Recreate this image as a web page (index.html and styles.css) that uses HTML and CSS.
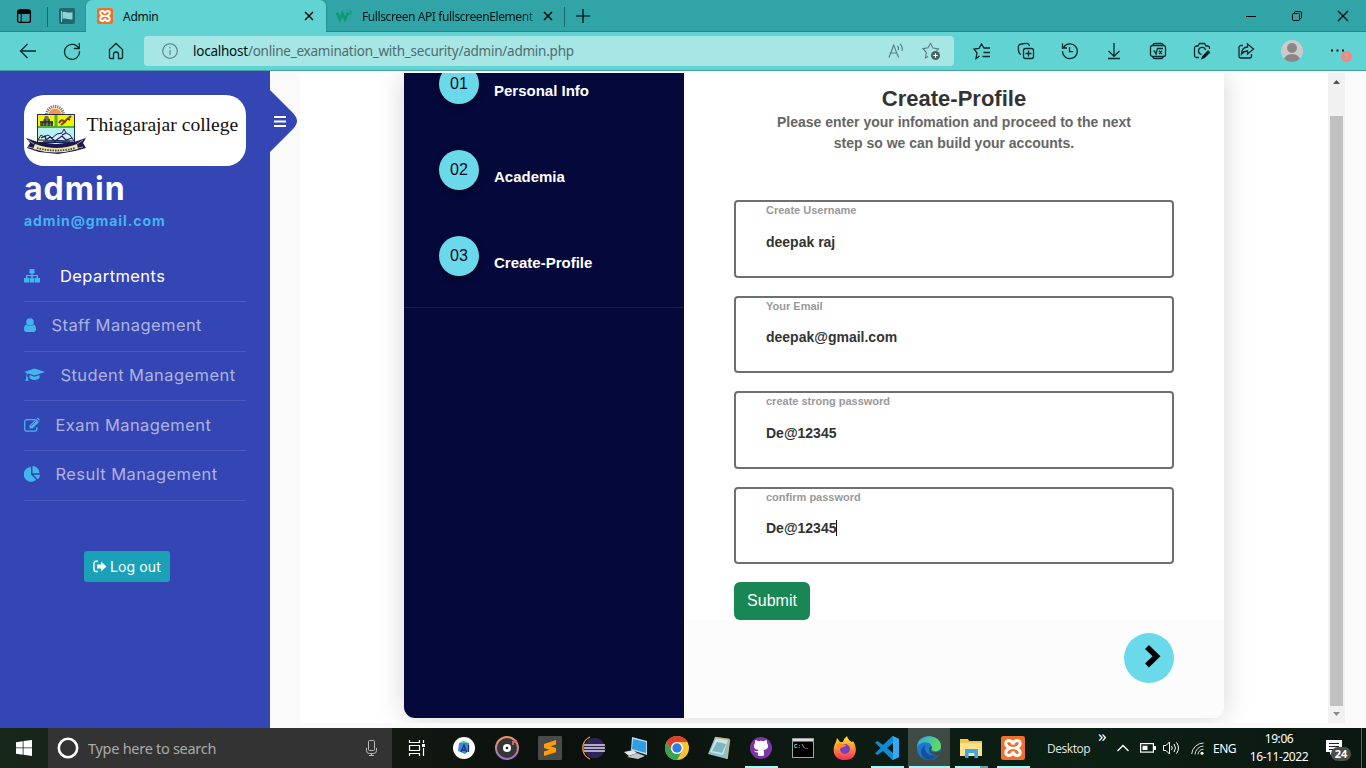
FILE: index.html
```html
<!DOCTYPE html>
<html lang="en">
<head>
<meta charset="utf-8">
<title>Admin</title>
<link rel="stylesheet" href="styles.css">
</head>
<body>
<div class="screen">
  <header class="tabstrip">
    <div class="tab-actions"><svg width="16" height="16" viewBox="0 0 16 16"><rect x="1.6" y="2" width="12.8" height="12.4" rx="2" fill="none" stroke="#000" stroke-width="1.3"/><path d="M1.5 3.5a2 2 0 0 1 2-2h9a2 2 0 0 1 2 2V6h-13z"/><path d="M5.2 5v9" stroke="#000"/></svg></div>
    <div class="pinned"><svg width="16" height="16" viewBox="0 0 16 16"><rect width="16" height="16" rx="2" fill="#20686d"/><path d="M2.5 3v11" stroke="#8cd3d5"/><path d="M3.500 4c3-1 5 1.500 10 .2v7c-4 1-6-1.500-10-.2z" fill="#8cd3d5"/></svg></div>
    <div class="tab active">
      <svg width="16" height="16" viewBox="0 0 16 16"><rect width="16" height="16" rx="2" fill="#ee702a"/><g fill="none" stroke="#fff" stroke-width="2"><path d="M8 5.700C7.400 2.200 3.200 2.300 3.200 5c0 2 2 2.500 3 3-1 .5-3 1-3 3 0 2.700 4.200 2.800 4.800-.7.600 3.500 4.800 3.400 4.800.7 0-2-2-2.500-3-3 1-.5 3-1 3-3 0-2.700-4.200-2.800-4.800.7z"/><path d="M5.500 8h5" stroke-width="1.500"/></g></svg>
      <span class="tab-title">Admin</span>
      <svg class="close" width="10" height="10" viewBox="0 0 10 10"><path d="M1 1l8 8M9 1L1 9" stroke="#000" stroke-width="1.400"/></svg>
    </div>
    <div class="tab">
      <svg width="17" height="16" viewBox="0 0 17 16"><path d="M1 4.500l2.800 7 2.600-6 2.600 6 3.200-7" fill="none" stroke="#0a9c70" stroke-width="2.700"/><path d="M13 3h2.500l-1.300 1.500c2 0 1.500 2.300-.8 1.700" fill="none" stroke="#0a9c70" stroke-width=".9"/></svg>
      <span class="tab-title faded">Fullscreen API fullscreenElement</span>
      <svg class="close" width="10" height="10" viewBox="0 0 10 10"><path d="M1 1l8 8M9 1L1 9" stroke="#000" stroke-width="1.400"/></svg>
    </div>
    <div class="newtab"><svg width="14" height="14" viewBox="0 0 14 14"><path d="M7 0v14M0 7h14" stroke="#000" stroke-width="1.200"/></svg></div>
    <div class="win-controls">
      <span><svg width="12" height="12" viewBox="0 0 12 12"><path d="M1 6.500h10" stroke="#000"/></svg></span>
      <span><svg width="12" height="12" viewBox="0 0 12 12" fill="none" stroke="#000"><rect x="1.500" y="3.500" width="7" height="7" rx="1"/><path d="M3.500 3V2.500a1 1 0 0 1 1-1H9A1.500 1.500 0 0 1 10.500 3v4.500a1 1 0 0 1-1 1H9"/></svg></span>
      <span><svg width="12" height="12" viewBox="0 0 12 12"><path d="M1 1l10 10M11 1L1 11" stroke="#000" stroke-width="1.100"/></svg></span>
    </div>
  </header>

  <nav class="toolbar">
    <div class="nav-buttons">
      <span><svg width="18" height="18" viewBox="0 0 18 18"><path d="M17 9H1.500M8.500 2L1.500 9l7 7"/></svg></span>
      <span><svg width="18" height="18" viewBox="0 0 18 18"><path d="M16 7A7.500 7.500 0 1 0 16.500 9M16.300 1v5.500h-5.500"/></svg></span>
      <span><svg width="18" height="18" viewBox="0 0 18 18"><path d="M2.500 7.500L9 1.500l6.500 6v8a1 1 0 0 1-1 1h-3v-4a2.500 2.500 0 0 0-5 0v4h-3a1 1 0 0 1-1-1z"/></svg></span>
    </div>
    <div class="address">
      <svg width="16" height="16" viewBox="0 0 16 16"><circle cx="8" cy="8" r="7.300"/><path d="M8 7v5M8 4v1.500"/></svg>
      <span class="url"><b>localhost</b>/online_examination_with_security/admin/admin.php</span>
      <svg class="aloud" width="18" height="18" viewBox="0 0 18 18"><path d="M2 15.500L6.700 3l4.800 12.500M3.500 11h6.500M10.500 4q1.500 1.500 1 4M13 2q3 2.500 2 7"/></svg>
      <svg width="19" height="19" viewBox="0 0 19 19"><path d="M6 14.500l-2.500 1.500.8-5.500L1 6.700l5-.9 2.500-4.500L11 6l5.500.9-2 2"/><circle cx="13.500" cy="13.500" r="4.500" fill="#4b6262" stroke="none"/><path d="M11.200 13.500h4.600M13.500 11.200v4.600" stroke="#fff"/></svg>
    </div>
    <div class="tools">
      <span><svg width="18" height="18" viewBox="0 0 18 18"><path d="M6.500 14L3 16.500l1-5.500-3-4 5-.7L8.500 2 11 6h6M10.500 10.500H17M9.500 14.500H17"/></svg></span>
      <span><svg width="18" height="18" viewBox="0 0 18 18"><rect x="6.500" y="6.500" width="10" height="10" rx="2"/><path d="M11.500 8.500v6M8.500 11.500h6M4 12.500C1 11.500 1.800 10 1.300 6 1 3 2 2.500 4.500 2L9 1.400c2-.2 3 .4 3.400 2.600"/></svg></span>
      <span><svg width="18" height="18" viewBox="0 0 18 18"><path d="M2.500 5.500A7.400 7.400 0 1 1 1.500 9M1.500 1.500v4.500H6M8.500 5v4.700h3.700"/></svg></span>
      <span><svg width="18" height="18" viewBox="0 0 18 18"><path d="M9 1v13M3.500 9L9 14.300 14.500 9M3 16.500h12"/></svg></span>
      <span><svg width="18" height="18" viewBox="0 0 18 18"><rect x="1.500" y="3.500" width="15" height="11" rx="2"/><path d="M4 3.500c0-2 1-2 2-2h6c1 0 2 0 2 2M4 14.500c0 2 1 2 2 2h6c1 0 2 0 2-2M4.500 9l1 .2L7 12l1.500-5.500H14M10 8.800l3 3.200M13 8.800L10 12"/></svg></span>
      <span><svg width="18" height="18" viewBox="0 0 18 18"><path d="M6 15.500H3.500a2 2 0 0 1-2-2V6a2 2 0 0 1 2-2H5l1.500-2.500h5L13 4h1.500a2 2 0 0 1 2 2v1M8.500 12.500A3.600 3.600 0 1 1 12.600 8"/><path d="M9 16.500l1-2.500 5-5 1.500 1.500-5 5z" fill="#000"/></svg></span>
      <span><svg width="18" height="18" viewBox="0 0 18 18"><path d="M6 3.500H4a2 2 0 0 0-2 2V14a2 2 0 0 0 2 2h8.500a2 2 0 0 0 2-2v-2M10.500 2l6 5-6 5V9c-3 0-4.500 1-6 3 .3-4 2.500-7 6-7z"/></svg></span>
      <span class="avatar"><svg width="22" height="22" viewBox="0 0 22 22"><defs><clipPath id="av"><circle cx="11" cy="11" r="11"/></clipPath></defs><g clip-path="url(#av)"><rect width="22" height="22" fill="#cbcbcb"/><circle cx="11" cy="8" r="5" fill="#888"/><ellipse cx="11" cy="20" rx="8" ry="6" fill="#888"/></g></svg></span>
      <span class="more"><svg width="24" height="24" viewBox="0 0 24 24"><path d="M3 10.500h2v2H3zM8.500 10.500h2v2h-2zM14 10.500h2v2h-2z" fill="#111"/><circle cx="18.500" cy="17.500" r="5.500" fill="#f7857b"/><path d="M18.500 20.500v-5.500M16.800 16.500l1.700-1.700 1.700 1.700" style="stroke:#b9b0a8" fill="none"/></svg></span>
    </div>
  </nav>

  <main class="page">
    <aside class="sidebar">
      <div class="logo">
        <svg class="crest" width="62" height="50" viewBox="0 0 62 50">
          <circle cx="30" cy="10" r="8.500" fill="none" stroke="#887652" stroke-width="3" stroke-dasharray="1.200 .9"/>
          <circle cx="30" cy="10" r="6.500" fill="#fa9448"/>
          <rect x="12.500" y="9.500" width="37" height="28" fill="#f2f500" stroke="#24275c"/>
          <path d="M13 23h36v9H13z" fill="#b7f1ed"/><path d="M13 21h36v2H13zM29.500 10h3v12h-3z" fill="#52b22f"/>
          <path d="M15 21v-5h3l2-5 3 0 2 5h3v5z" fill="#77744b"/><path d="M15 17h13M17 17v4M20 14v7M24 14v7M27 17v4" stroke="#111435"/>
          <path d="M34 18q3-5 5-1l7-6M36 20l5-4M42 13l3 2" fill="none" stroke="#7a3b12" stroke-width="2"/>
          <path d="M13 35l3-5 3 2 4-2 4 3 5-4 5-1 2-4 2 4 4 2 4 6z" fill="#dbe9f7" stroke="#14245d"/>
          <path d="M16 33l4-2 1 4 4-3 5 4 7-5 4 4 6-2M18 37h27M37 30l4-2" fill="none" stroke="#112660" stroke-width="1.300"/>
          <path d="M1 33l12 4 18 2 18-2 12-4-3 5 3 5-11 3-17 3-19-2-12-4 3-5z" fill="#1b194f"/>
          <path d="M10 39q22 8 42 0l1 5q-23 7-45 0z" fill="#ece8ab"/><path d="M12 43q20 5 38 0" fill="none" stroke="#3f3e49" stroke-width="1.800" stroke-dasharray="1.500 1.100"/>
          <path d="M3 35l6 4M58 35l-6 4M3 42l5 1M58 42l-5 1" stroke="#9ca0bf"/>
        </svg>
        <span>Thiagarajar college</span>
      </div>
      <h1>admin</h1>
      <p class="mail">admin@gmail.com</p>
      <ul class="menu">
        <li class="on"><svg width="16" height="16" viewBox="0 0 16 16"><path d="M5.500 1h5v4.500H8.700V7H14v3h2v4.500h-5V10h1.500V8.300H8.700V10h1.800v4.500h-5V10h1.800V8.300H3.500V10H5v4.500H0V10h2V7h5.300V5.500H5.500z"/></svg><span>Departments</span></li>
        <li><svg width="12" height="16" viewBox="0 0 12 16"><circle cx="6" cy="5" r="3.800"/><path d="M2.500 7.500C.7 8 0 9.800 0 12c0 2 1 3 2.500 3h7c1.500 0 2.500-1 2.500-3 0-2.200-.7-4-2.500-4.500-2 2-5 2-7 0z"/></svg><span>Staff Management</span></li>
        <li><svg width="21" height="16" viewBox="0 0 21 16"><path d="M10.500 1.500L21 5 10.500 8.500 4 6.400Q3.200 7 3 9l.8 1L4.500 14H1.500l.8-4 .5-3.900L0 5zM5.500 8l5 1.700 5-1.700v3c-2 2.600-8 2.600-10 0z"/></svg><span>Student Management</span></li>
        <li><svg width="16" height="16" viewBox="0 0 16 16"><path d="M11.500 2.700H3A2.300 2.300 0 0 0 .7 5v7A2.300 2.300 0 0 0 3 14.200h7.500A2.300 2.300 0 0 0 12.800 12v-2" fill="none" stroke="#42b5ed" stroke-width="1.300"/><path d="M5.500 8.500L12 2l3 3-6.500 6.500h-3zM12.700 1.300l1-.8 2.300 2.300-.8 1z"/><path d="M7 9l5-5" stroke="#3445b4" stroke-width=".7"/></svg><span>Exam Management</span></li>
        <li><svg width="16" height="16" viewBox="0 0 16 16"><path d="M7 1v7.500l5.200 5.300A7.400 7.400 0 1 1 7 1zM8.500 0a7 7 0 0 1 7 7.300h-7zM9.300 8.700H16a7 7 0 0 1-2 4.700z"/></svg><span>Result Management</span></li>
      </ul>
      <a class="logout"><svg width="14" height="13" viewBox="0 0 14 13"><path d="M5 1.200H3A2 2 0 0 0 1 3v6.500A2 2 0 0 0 3 11.500h2" fill="none" stroke="#fff" stroke-width="1.400"/><path d="M8 1.500l5.500 5L8 11.500v-3H4V4.500h4z" fill="#fff"/></svg><span>Log out</span></a>
      <svg class="toggle" width="28" height="62" viewBox="0 0 28 62"><path d="M0 0l22 22q5 5 5 9t-5 9L0 62z" fill="#3445b4"/><path d="M4 27h12M4 31.500h12M4 36h12" stroke="#fff" stroke-width="2.200"/></svg>
    </aside>

    <section class="content">
      <div class="frame">
        <div class="view">
        <div class="card">
          <div class="steps">
            <div class="step"><i>01</i><b>Personal Info</b></div>
            <div class="step"><i>02</i><b>Academia</b></div>
            <div class="step"><i>03</i><b>Create-Profile</b></div>
          </div>
          <div class="form">
            <div class="form-main">
              <h2>Create-Profile</h2>
              <p class="lead">Please enter your infomation and proceed to the next<br>step so we can build your accounts.</p>
              <div class="fields">
                <div class="field"><label>Create Username</label><span>deepak raj</span></div>
                <div class="field"><label>Your Email</label><span>deepak@gmail.com</span></div>
                <div class="field"><label>create strong password</label><span>De@12345</span></div>
                <div class="field"><label>confirm password</label><span class="caret">De@12345</span></div>
              </div>
              <button class="submit">Submit</button>
            </div>
            <div class="form-foot"><div class="next"><svg width="50" height="50" viewBox="0 0 50 50"><path d="M23 14l9.500 9.300-9.500 9.200" fill="none" stroke="#000" stroke-width="5.500"/></svg></div></div>
          </div>
        </div>
        </div>
        <div class="scrollbar">
          <svg width="17" height="17" viewBox="0 0 17 17"><path d="M5 11l3.500-4L12 11z" fill="#505050"/></svg>
          <div class="thumb"></div>
          <svg width="17" height="17" viewBox="0 0 17 17"><path d="M5 6l3.500 4L12 6z" fill="#8a8a8a"/></svg>
        </div>
      </div>
    </section>
  </main>

  <footer class="taskbar">
    <div class="start"><svg width="16" height="16" viewBox="0 0 16 16" fill="#fff"><path d="M0 2.200L6.700 1.200V7.500H0zM7.500 1.100L16 0v7.500H7.500zM0 8.300h6.700v6.400L0 13.800zM7.500 8.300H16V16l-8.500-1.200z"/></svg></div>
    <div class="search"><svg width="22" height="22" viewBox="0 0 22 22"><circle cx="11" cy="11" r="9.200" fill="none" stroke="#fff" stroke-width="2.600"/></svg><span>Type here to search</span><svg class="mic" width="13" height="18" viewBox="0 0 13 18" fill="none" stroke="#bbb"><rect x="3.500" y="1.500" width="6" height="10" rx="1"/><path d="M1.500 9v2.500a3 3 0 0 0 3 3h4a3 3 0 0 0 3-3V9M6.500 14.500v2M4 16.500h5"/></svg></div>
    <div class="taskview"><svg width="17" height="16" viewBox="0 0 17 16" fill="none" stroke="#fff" stroke-width="1.200"><path d="M1.500 0v2.500h10V0M1.500 16v-2.500h10V16M1.500 5.500h10v5h-10zM15.500 0v3M15.500 8v8"/><path d="M14 4h3v3h-3z" fill="#fff" stroke="none"/></svg></div>
    <div class="apps wide">
      <span><svg width="22" height="22" viewBox="0 0 22 22"><circle cx="11" cy="11" r="11" fill="#fff"/><path d="M6 6l4-1 6 1v8l-4 3-7-3z" fill="#4285ef"/><path d="M7 6q3-4 8 0z" fill="#45d781"/><path d="M8 15l3-7 2.500 7M9 13h3.500M15.500 8v7" stroke="#17355d" stroke-width="1.300" fill="none"/></svg></span>
      <span><svg width="24" height="24" viewBox="0 0 24 24"><defs><linearGradient id="mu" x2="0" y2="1"><stop stop-color="#f39361"/><stop offset="1" stop-color="#9772c6"/></linearGradient></defs><circle cx="12" cy="12" r="11" fill="#353638" stroke="url(#mu)" stroke-width="2"/><circle cx="12" cy="12" r="4" fill="#fff"/><circle cx="12" cy="12" r="1.300" fill="#222"/><path d="M18 9V6l4-1" stroke="#c47070" stroke-width="2" fill="none"/></svg></span>
      <span><svg width="24" height="24" viewBox="0 0 24 24"><rect width="24" height="24" rx="1" fill="#4a4a4a"/><path d="M6 8l12-4v4.500L12.500 10.300 18 12v4.200L6 20v-4.500l5.500-1.800L6 12z" fill="#ff9b05"/></svg></span>
      <span><svg width="24" height="24" viewBox="0 0 24 24"><path d="M9 1A12 12 0 0 0 9 23 12 12 0 0 1 9 1" fill="#f79824" stroke="#f79824"/><circle cx="13.500" cy="12" r="10.300" fill="#2d2454"/><path d="M3 9h21M3 12h21M3 15h21" stroke="#d9d7e8" stroke-width="1.600"/></svg></span>
      <span><svg width="24" height="24" viewBox="0 0 24 24"><path d="M8 1l15 4v14L7 14z" fill="#b5dff4"/><path d="M9 3l13 3v11L8 13z" fill="#329ee2"/><path d="M0 16l9-2 4 3-8 3z" fill="#e2e6e7"/><path d="M3 21l10-4 8 3-7 3z" fill="#bec6c9"/></svg></span>
    </div>
    <div class="apps">
      <span><svg width="24" height="24" viewBox="0 0 24 24"><circle cx="12" cy="12" r="12" fill="#fbc42e"/><path d="M1.600 6A12 12 0 0 1 22.400 6H12a6 6 0 0 0-5.200 9z" fill="#e23e30"/><path d="M1.600 6A12 12 0 0 0 12 24l5.200-9a6 6 0 0 1-10.400 0z" fill="#35a34f"/><circle cx="12" cy="12" r="6" fill="#fff"/><circle cx="12" cy="12" r="4.700" fill="#347de8"/></svg></span>
      <span><svg width="24" height="24" viewBox="0 0 24 24"><path d="M8 1l15 2-3 20-19-5z" fill="#89bfc5"/><path d="M9 2l12 2-5 15-13-3z" fill="#c7e6e9"/><path d="M8 1.500l14 2M20 23l2.500-19" stroke="#cbb27b" stroke-width="1.500"/><path d="M10 6L5 15l10 2 4-9z" fill="#7fb5bf"/></svg></span>
      <span class="run"><svg width="22" height="22" viewBox="0 0 22 22"><circle cx="11" cy="11" r="11" fill="#7e35a6"/><path d="M8 18.500v-3q-3 .5-4-2 2 1 4 .5l.5-1C5 12.500 4 11 4 9q0-1.800 1.100-3-.3-1.500.3-3 1.500.2 3 1.200a10 10 0 0 1 5.200 0q1.500-1 3-1.200.6 1.500.3 3Q18 7.200 18 9c0 2-1 3.500-4.500 4q.7.800.5 2v3.500q-3 1-6 0z" fill="#fff"/></svg></span>
      <span><svg width="22" height="20" viewBox="0 0 22 20"><rect x=".5" y=".5" width="21" height="19" fill="#000" stroke="#9fa5a7"/><path d="M1 1h20v2.500H1z" fill="#d9dfe1"/><text x="2" y="10" font-size="6" fill="#fff" font-family="Liberation Mono, monospace">C:\_</text></svg></span>
      <span><svg width="24" height="24" viewBox="0 0 24 24"><defs><linearGradient id="ff" x2="0" y2="1"><stop stop-color="#ffe52e"/><stop offset=".5" stop-color="#ff9331"/><stop offset="1" stop-color="#f52965"/></linearGradient></defs><path d="M3 6l1-4 3 4h3q1-4 4-6 1 4 5 6l1-1c5 7 4 19-8 19C-1 24-1 12 3 6z" fill="url(#ff)"/><circle cx="12" cy="13" r="5" fill="#743fc9"/><path d="M4 8c3-2 5 0 9 1-1 3-4 1-6 4-2-1-3-3-3-5z" fill="#ff8c25"/></svg></span>
      <span class="run"><svg width="24" height="24" viewBox="0 0 24 24"><path d="M17.500 0L24 3v18l-6.500 3L8 15l-5.500 4L0 17.500 5.500 12 0 6.500 2.500 5 8 9zM18 7l-6 5 6 5z" fill="#108bd3" fill-rule="evenodd"/><path d="M18 0l6 3v18l-6 3z" fill="#35a9f2"/></svg></span>
      <span class="run current"><svg width="24" height="24" viewBox="0 0 24 24"><defs><linearGradient id="ed" x2="1" y2=".3"><stop stop-color="#2ba6e5"/><stop offset="1" stop-color="#61d867"/></linearGradient></defs><circle cx="12" cy="12" r="12" fill="#197bcf"/><path d="M0 11C1-4 24-2 24 10c0 6-7 6-9 4-2-1 0-2-.5-4C13 5 4 5 0 11z" fill="url(#ed)"/><path d="M8 9c-2 6 3 12 13 10-6 8-17 5-17-3 0-3 2-6 4-7z" fill="#164f9e"/><path d="M14.500 10q1 2-.3 3.500-.7 2 3.300 2.700 3.500 0 6.500-2.200l-2 5q-8 1-10-4.500-.3-3.500 2.500-4.500" fill="#40494a"/></svg></span>
      <span class="run files"><svg width="22" height="20" viewBox="0 0 22 20"><path d="M0 1h8l1 2h13v15H0z" fill="#f4c64e"/><path d="M0 5h22v13H0z" fill="#ffe18b"/><path d="M5 11h13v9h-3.500v-5h-6v5H5z" fill="#39a6e5"/></svg></span>
      <span class="run"><svg width="24" height="24" viewBox="0 0 16 16"><rect width="16" height="16" rx="1.500" fill="#ee702a"/><g fill="none" stroke="#fff" stroke-width="2"><path d="M8 5.700C7.400 2.200 3.200 2.300 3.200 5c0 2 2 2.500 3 3-1 .5-3 1-3 3 0 2.700 4.200 2.800 4.800-.7.600 3.500 4.800 3.400 4.800.7 0-2-2-2.500-3-3 1-.5 3-1 3-3 0-2.700-4.200-2.800-4.800.7z"/><path d="M5.500 8h5" stroke-width="1.500"/></g></svg></span>
    </div>
    <div class="tray">
      <span class="desktop">Desktop</span><span class="raquo">»</span>
      <svg class="chev" width="12" height="8" viewBox="0 0 12 8" fill="none" stroke="#fff" stroke-width="1.300"><path d="M.5 7L6 1.500 11.500 7"/></svg>
      <svg class="bat" width="16" height="10" viewBox="0 0 16 10"><rect x=".6" y=".6" width="12.800" height="8.500" fill="none" stroke="#fff" stroke-width="1.200"/><path d="M2.500 2.700h5v4.300h-5zM14 3h2v4h-2z" fill="#fff"/></svg>
      <svg class="vol" width="17" height="14" viewBox="0 0 17 14" fill="none" stroke="#fff"><path d="M.5 4.500H3L6.500 1v12L3 9.500H.5zM8.500 5q1.500 2 0 4M11 3q3 4 0 8M13.500 1.500q4 5.500 0 11"/></svg>
      <svg class="wifi" width="13" height="13" viewBox="0 0 13 13" fill="none" stroke="#ddd"><path d="M.7 12A12 12 0 0 1 12.500 1M4 12.500A9 9 0 0 1 12.500 4M7 12.500a6 6 0 0 1 5.500-5.300"/><circle cx="11" cy="11.300" r="1.500" fill="#fff" stroke="none"/></svg>
      <span class="lang">ENG</span>
      <span class="clock">19:06<br>16-11-2022</span>
      <span class="notif"><svg width="16" height="15" viewBox="0 0 16 15"><path d="M0 0h16v12H7l-3 3v-3H0z" fill="#fff"/><path d="M3 3.500h10M3 6.500h10M3 9.500h6" stroke="#222"/></svg><em>24</em></span>
    </div>
  </footer>
</div>
</body>
</html>
```

FILE: styles.css
```css
* { box-sizing: border-box; }
body { margin: 0; overflow: hidden; font-family: "Liberation Sans", sans-serif; }
h1, h2, p, ul { margin: 0; padding: 0; }
svg { flex: none; display: block; }
.screen { width: 1366px; height: 768px; display: flex; flex-direction: column; }

/* browser chrome */
.tabstrip { height: 32px; flex: none; display: flex; background: #31a4a8; border-bottom: 1px solid #278488; font: 12px "Noto Sans", sans-serif; color: #001416; }
.tab-actions { width: 48px; display: flex; align-items: center; justify-content: center; background: linear-gradient(#16696c, #16696c) 47px 7px / 1px 20px no-repeat; }
.pinned { width: 38px; display: flex; align-items: center; justify-content: center; }
.tab { width: 239px; height: 32px; display: flex; align-items: center; padding: 0 12px 0 10px; background: linear-gradient(#16696c, #16696c) right 7px / 1px 20px no-repeat; }
.tab svg:first-child { margin-right: 9px; }
.tab.active { width: 240px; padding-left: 11px; padding-right: 12px; background: #62d3d3; border-radius: 6px 6px 0 0; box-shadow: 0 0 2px #1a7275; position: relative; clip-path: inset(0 -3px 0 -3px); }
.tab.active svg:first-child { margin-right: 10px; }
.tab-title { flex: 1; white-space: nowrap; overflow: hidden; font-size: 12px; letter-spacing: -.25px; }
.tab-title.faded { letter-spacing: -.4px; -webkit-mask-image: linear-gradient(90deg, #000 88%, rgba(0,0,0,.3) 96%); }
.newtab { width: 35px; display: flex; align-items: center; justify-content: center; }
.win-controls { margin-left: auto; display: flex; }
.win-controls span { width: 46px; display: flex; align-items: center; justify-content: center; }
.toolbar { height: 39px; flex: none; display: flex; align-items: center; background: #62d3d3; border-bottom: 1px solid #479fa1; }
.toolbar svg { fill: none; stroke: #10292a; stroke-width: 1.3; }
.nav-buttons { width: 144px; padding-left: 6px; display: flex; }
.nav-buttons span, .tools > span { width: 44px; display: flex; align-items: center; justify-content: center; }
.address { width: 810px; height: 30px; border-radius: 4px; background: #a6e6e5; display: flex; align-items: center; padding: 0 13px 0 18px; }
.address svg { stroke: #5b7d7d; stroke-width: 1.1; }
.url { flex: 1; margin-left: 15px; font: 13.5px "Noto Sans", sans-serif; letter-spacing: -.24px; color: #506d6e; }
.url b { font-weight: 400; color: #001416; }
.aloud { margin-right: 17px; }
.tools { display: flex; padding-left: 6px; }
.toolbar .avatar svg, .toolbar .more svg { stroke: none; }
.avatar { padding-left: 4px; }
.tools .more { padding-left: 4px; width: 52px; }

/* page */
.page { height: 657px; flex: none; display: flex; background: #fafafa; }
.sidebar { width: 270px; background: #3445b4; padding: 24px; position: relative; font-family: Inter, sans-serif; color: #fff; }
.toggle { position: absolute; left: 270px; top: 19px; z-index: 2; }
.logo { height: 71px; background: #fff; border-radius: 20px; display: flex; color: #111; padding: 10px 0 0 1px; }
.logo span { font: 19.6px/22px "Liberation Serif", serif; margin: 9px 0 0 -.5px; white-space: nowrap; }
.sidebar h1 { font-size: 32px; line-height: 39px; margin-top: 3px; letter-spacing: 1px; }
.mail { font-size: 14px; line-height: 20px; margin-top: 3px; font-weight: 700; color: #42b5ed; letter-spacing: .9px; white-space: nowrap; }
.menu { list-style: none; margin-top: 21.2px; }
.menu li { height: 49.7px; display: flex; align-items: center; padding-bottom: 2px; border-bottom: 1px solid rgba(255,255,255,.12); color: rgba(255,255,255,.6); font-size: 16.5px; letter-spacing: .42px; white-space: nowrap; }
.menu svg { fill: #42b5ed; margin-right: 15.5px; }
.menu .on { color: #fff; }
.menu .on svg { margin-right: 20px; }
.logout { width: 86px; height: 31px; margin: 50.3px 0 0 60px; border-radius: 3px; background: #1aa1b8; display: flex; align-items: center; justify-content: center; gap: 3px; font-size: 14px; letter-spacing: .1px; }
.content { flex: 1; padding: 2px 21px 5px 30px; }
.frame { height: 650px; width: 1045px; display: flex; overflow: hidden; background: #fff; }
.view { width: 1028px; height: 650px; padding-left: 104px; overflow: hidden; }
.card { width: 820px; height: 645px; display: flex; border-radius: 0 0 11px 11px; box-shadow: 0 0 28px rgba(0,0,0,.17); }
.steps { width: 280px; background: #05083a; border-radius: 0 0 0 11px; overflow: hidden; }
.step { height: 86px; padding-left: 35px; display: flex; align-items: flex-start; gap: 15px; color: #fff; }
.step:first-child { margin-top: -9px; height: 86px; }
.step:nth-child(3) { height: 72px; border-bottom: 1px solid #1b1d4b; }
.step i { width: 40px; height: 40px; border-radius: 50%; background: #6adaeb; color: #09092a; font-style: normal; font-size: 16px; line-height: 39px; text-align: center; box-shadow: 0 3px 7px rgba(0,0,0,.35); }
.step b { font-size: 15px; line-height: 20px; margin-top: 17px; }
.form { width: 540px; display: flex; flex-direction: column; border-radius: 0 0 11px 0; overflow: hidden; background: #fcfcfc; }
.form-main { height: 547px; background: #fff; padding: 12px 50px 0; flex: none; }
.form h2 { font-size: 22px; line-height: 27px; text-align: center; color: #333; }
.lead { font-size: 14px; line-height: 21px; font-weight: 700; text-align: center; color: #666; }
.fields { margin-top: 46px; display: flex; flex-direction: column; gap: 18px; }
.field { height: 77.6px; border: 2px solid #6f6f72; border-radius: 4px; padding: 2px 30px; display: flex; flex-direction: column; font-weight: 700; }
.field label { font-size: 11px; line-height: 12px; color: #999; }
.field span { font-size: 14px; line-height: 16px; color: #333; margin-top: 17.5px; align-self: flex-start; }
.caret { border-right: 1px solid #111; }
.submit { display: block; width: 76px; height: 38px; margin-top: 18px; padding: 0; border: 0; border-radius: 6px; background: #198754; color: #fff; font: 16px "Liberation Sans", sans-serif; }
.form-foot { padding: 13px 50px 0; display: flex; justify-content: flex-end; }
.next { width: 50px; height: 50px; border-radius: 50%; background: #6adaeb; }
.scrollbar { width: 17px; background: #f1f1f1; display: flex; flex-direction: column; }
.thumb { width: 13px; height: 590px; margin: 26px auto 0; background: #c1c1c1; }

/* taskbar */
.taskbar { height: 40px; flex: none; display: flex; background: linear-gradient(90deg, #172719 0, #101810 30%, #0b110d 40%, #0d1c13 65%, #0b2014 82%, #0b1711); color: #fff; font: 12px "Noto Sans", sans-serif; }
.start { width: 48px; display: flex; align-items: center; justify-content: center; }
.search { width: 344px; background: #333; display: flex; align-items: center; padding: 0 14px 0 9px; color: #aaa; font-size: 14.5px; }
.search span { flex: 1; margin-left: 9px; letter-spacing: -.28px; }
.taskview { width: 50px; padding-right: 2px; display: flex; align-items: center; justify-content: center; }
.apps { display: flex; margin-left: -1px; }
.apps.wide { margin-left: 0; }
.apps span { width: 42px; display: flex; align-items: center; justify-content: center; }
.apps.wide span { width: 43px; }
.apps .run { background: linear-gradient(#9ffafa, #9ffafa) center bottom / 33px 2px no-repeat; }
.apps .current { background: linear-gradient(#9ffafa, #9ffafa) center bottom / 41px 2px no-repeat, #3e4a42; }
.apps .files { background: linear-gradient(90deg, #9ffafa 25px, #5fa8a5 25px) center bottom / 33px 2px no-repeat; }
.tray { flex: 1; display: flex; align-items: center; border-right: 1px solid #58635b; margin-right: 4px; white-space: nowrap; }
.desktop { width: 43px; margin-left: 13px; letter-spacing: -.5px; color: #ddd; }
.raquo { width: 12px; margin: -26px 0 0 8px; font-size: 17px; }
.chev { margin-left: 7px; }
.bat { margin-left: 11px; }
.vol { margin-left: 7px; }
.wifi { margin-left: 11px; }
.lang { width: 24px; margin-left: 9px; letter-spacing: -.5px; }
.clock { width: 60px; margin-left: 12px; text-align: center; line-height: 18px; letter-spacing: -.42px; }
.notif { position: relative; margin: -2px 0 0 17px; }
.notif em { position: absolute; left: 5px; top: 7px; width: 20px; height: 14px; border-radius: 7px; background: #4a4f4c; font: 700 11px/14px "Noto Sans", sans-serif; text-align: center; }
```
